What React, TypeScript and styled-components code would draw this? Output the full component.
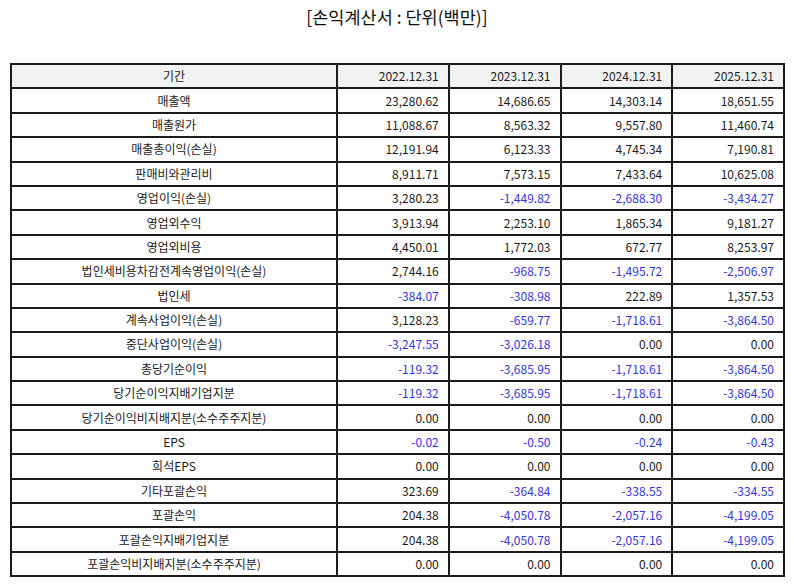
import React from "react";
import styled, { createGlobalStyle } from "styled-components";

const Global = createGlobalStyle`
  html, body { margin: 0; padding: 0; background: #fff; }
  body { font-family: "Noto Sans CJK KR", "Noto Sans", sans-serif; color: #111; }
`;

const Page = styled.div`
  width: 794px;
  padding: 0 10px;
  box-sizing: border-box;
`;

const Title = styled.h1`
  margin: 0;
  padding-top: 6px;
  height: 63px;
  box-sizing: border-box;
  text-align: center;
  font-size: 17.5px;
  font-weight: 400;
  line-height: 22px;
  color: #111;
`;

const Table = styled.table`
  width: 775px;
  border-collapse: collapse;
  table-layout: fixed;
  font-size: 12px;
`;

const Cell = styled.td<{ $label?: boolean; $neg?: boolean; $head?: boolean }>`
  border: 2px solid #1c1c1c;
  height: 24.4px;
  padding: 0 9px;
  box-sizing: border-box;
  line-height: 14px;
  font-weight: 400;
  text-align: ${(p) => (p.$label ? "center" : "right")};
  color: ${(p) => (p.$neg ? "#3434e6" : "#1a1a1a")};
  background: ${(p) => (p.$head ? "#f2f2f2" : "#fff")};
  white-space: nowrap;
`;

const years = ["2022.12.31", "2023.12.31", "2024.12.31", "2025.12.31"];

const rows: [string, string[]][] = [
  ["매출액", ["23,280.62", "14,686.65", "14,303.14", "18,651.55"]],
  ["매출원가", ["11,088.67", "8,563.32", "9,557.80", "11,460.74"]],
  ["매출총이익(손실)", ["12,191.94", "6,123.33", "4,745.34", "7,190.81"]],
  ["판매비와관리비", ["8,911.71", "7,573.15", "7,433.64", "10,625.08"]],
  ["영업이익(손실)", ["3,280.23", "-1,449.82", "-2,688.30", "-3,434.27"]],
  ["영업외수익", ["3,913.94", "2,253.10", "1,865.34", "9,181.27"]],
  ["영업외비용", ["4,450.01", "1,772.03", "672.77", "8,253.97"]],
  ["법인세비용차감전계속영업이익(손실)", ["2,744.16", "-968.75", "-1,495.72", "-2,506.97"]],
  ["법인세", ["-384.07", "-308.98", "222.89", "1,357.53"]],
  ["계속사업이익(손실)", ["3,128.23", "-659.77", "-1,718.61", "-3,864.50"]],
  ["중단사업이익(손실)", ["-3,247.55", "-3,026.18", "0.00", "0.00"]],
  ["총당기순이익", ["-119.32", "-3,685.95", "-1,718.61", "-3,864.50"]],
  ["당기순이익지배기업지분", ["-119.32", "-3,685.95", "-1,718.61", "-3,864.50"]],
  ["당기순이익비지배지분(소수주주지분)", ["0.00", "0.00", "0.00", "0.00"]],
  ["EPS", ["-0.02", "-0.50", "-0.24", "-0.43"]],
  ["희석EPS", ["0.00", "0.00", "0.00", "0.00"]],
  ["기타포괄손익", ["323.69", "-364.84", "-338.55", "-334.55"]],
  ["포괄손익", ["204.38", "-4,050.78", "-2,057.16", "-4,199.05"]],
  ["포괄손익지배기업지분", ["204.38", "-4,050.78", "-2,057.16", "-4,199.05"]],
  ["포괄손익비지배지분(소수주주지분)", ["0.00", "0.00", "0.00", "0.00"]],
];

export default function App() {
  return (
    <Page>
      <Global />
      <Title>[손익계산서 : 단위(백만)]</Title>
      <Table>
        <colgroup>
          <col style={{ width: 326 }} />
          <col />
          <col />
          <col />
          <col />
        </colgroup>
        <thead>
          <tr>
            <Cell as="th" $label $head>기간</Cell>
            {years.map((y) => (
              <Cell as="th" key={y} $head>{y}</Cell>
            ))}
          </tr>
        </thead>
        <tbody>
          {rows.map(([label, vals]) => (
            <tr key={label}>
              <Cell $label>{label}</Cell>
              {vals.map((v, i) => (
                <Cell key={i} $neg={v.startsWith("-")}>{v}</Cell>
              ))}
            </tr>
          ))}
        </tbody>
      </Table>
    </Page>
  );
}
